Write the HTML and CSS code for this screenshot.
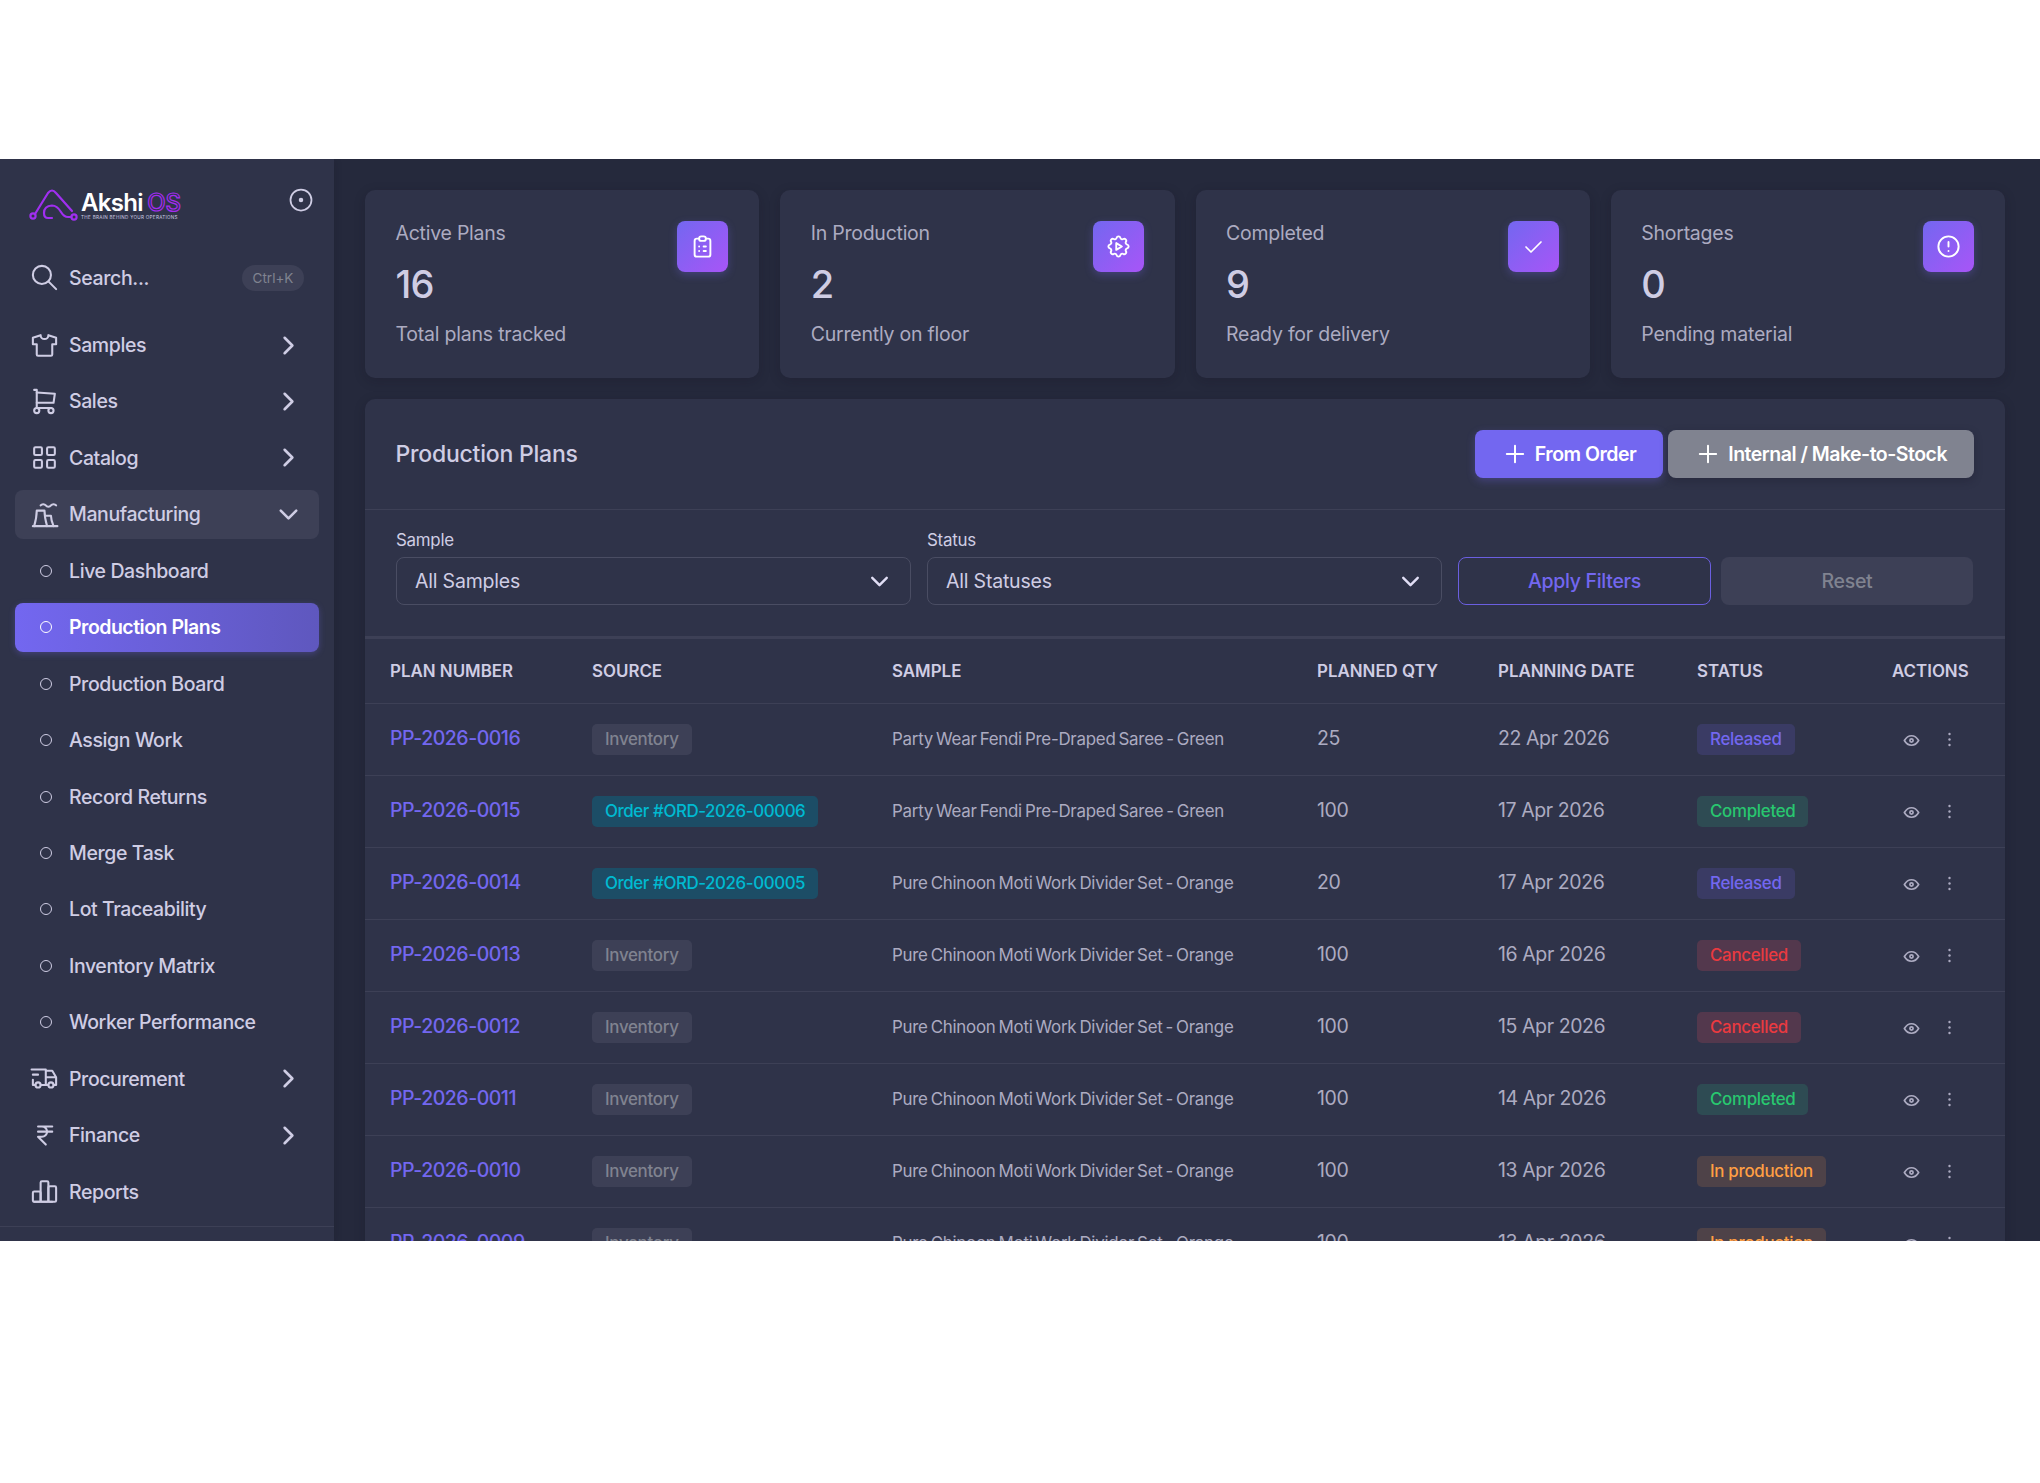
FILE: index.html
```html
<!DOCTYPE html>
<html lang="en">
<head>
    <meta charset="UTF-8">
    <meta name="viewport" content="width=device-width, initial-scale=1.0">
    <title>Production Plans</title>
    <link rel="stylesheet" href="styles.css">
</head>
<body>
    <!-- Icon sprite -->
    <svg class="sprite" xmlns="http://www.w3.org/2000/svg">
        <symbol id="i-search" viewBox="0 0 24 24"><circle cx="10" cy="10" r="7"/><path d="M21 21l-6 -6"/></symbol>
        <symbol id="i-shirt" viewBox="0 0 24 24"><path d="M15 4l6 2v5h-3v8a1 1 0 0 1 -1 1h-10a1 1 0 0 1 -1 -1v-8h-3v-5l6 -2a3 3 0 0 0 6 0"/></symbol>
        <symbol id="i-cart" viewBox="0 0 24 24"><circle cx="6" cy="19" r="2"/><circle cx="17" cy="19" r="2"/><path d="M17 17h-11v-14h-2"/><path d="M6 5l14 1l-1 7h-13"/></symbol>
        <symbol id="i-grid" viewBox="0 0 24 24"><rect x="4" y="4" width="6" height="6" rx="1"/><rect x="14" y="4" width="6" height="6" rx="1"/><rect x="4" y="14" width="6" height="6" rx="1"/><rect x="14" y="14" width="6" height="6" rx="1"/></symbol>
        <symbol id="i-factory" viewBox="0 0 24 24"><path d="M4 21c1.147 -4.02 1.983 -8.027 2 -12h6c.017 3.973 .853 7.98 2 12"/><path d="M12.5 13h4.5c.025 2.612 .894 5.296 2 8"/><path d="M9 5a2.4 2.4 0 0 1 2 -1a2.4 2.4 0 0 1 2 1a2.4 2.4 0 0 0 2 1a2.4 2.4 0 0 0 2 -1a2.4 2.4 0 0 1 2 -1a2.4 2.4 0 0 1 2 1"/><path d="M3 21l19 0"/></symbol>
        <symbol id="i-truck" viewBox="0 0 24 24"><circle cx="7" cy="17" r="2"/><circle cx="17" cy="17" r="2"/><path d="M5 17h-2v-4m-1 -8h11v12m-4 0h6m4 0h2v-6h-8m0 -5h5l3 5"/><path d="M3 9l4 0"/></symbol>
        <symbol id="i-rupee" viewBox="0 0 24 24"><path d="M18 5h-11h3a4 4 0 0 1 0 8h-3l6 6"/><path d="M7 9l11 0"/></symbol>
        <symbol id="i-chart" viewBox="0 0 24 24"><path d="M3 13a1 1 0 0 1 1 -1h4a1 1 0 0 1 1 1v6a1 1 0 0 1 -1 1h-4a1 1 0 0 1 -1 -1z"/><path d="M15 9a1 1 0 0 1 1 -1h4a1 1 0 0 1 1 1v10a1 1 0 0 1 -1 1h-4a1 1 0 0 1 -1 -1z"/><path d="M9 5a1 1 0 0 1 1 -1h4a1 1 0 0 1 1 1v14a1 1 0 0 1 -1 1h-4a1 1 0 0 1 -1 -1z"/><path d="M4 20h14"/></symbol>
        <symbol id="i-right" viewBox="0 0 24 24"><path d="M9 6l6 6l-6 6"/></symbol>
        <symbol id="i-down" viewBox="0 0 24 24"><path d="M6 9l6 6l6 -6"/></symbol>
        <symbol id="i-plus" viewBox="0 0 24 24"><path d="M12 5l0 14"/><path d="M5 12l14 0"/></symbol>
        <symbol id="i-clipboard" viewBox="0 0 24 24"><path d="M9 5h-2a2 2 0 0 0 -2 2v12a2 2 0 0 0 2 2h10a2 2 0 0 0 2 -2v-12a2 2 0 0 0 -2 -2h-2"/><path d="M9 5a2 2 0 0 1 2 -2h2a2 2 0 0 1 2 2v0a2 2 0 0 1 -2 2h-2a2 2 0 0 1 -2 -2z"/><path d="M9 12l.01 0"/><path d="M13 12l2 0"/><path d="M9 16l.01 0"/><path d="M13 16l2 0"/></symbol>
        <symbol id="i-gear" viewBox="0 0 24 24"><path d="M10.325 4.317c.426 -1.756 2.924 -1.756 3.35 0a1.724 1.724 0 0 0 2.573 1.066c1.543 -.94 3.31 .826 2.37 2.37a1.724 1.724 0 0 0 1.065 2.572c1.756 .426 1.756 2.924 0 3.35a1.724 1.724 0 0 0 -1.066 2.573c.94 1.543 -.826 3.31 -2.37 2.37a1.724 1.724 0 0 0 -2.572 1.065c-.426 1.756 -2.924 1.756 -3.35 0a1.724 1.724 0 0 0 -2.573 -1.066c-1.543 .94 -3.31 -.826 -2.37 -2.37a1.724 1.724 0 0 0 -1.065 -2.572c-1.756 -.426 -1.756 -2.924 0 -3.35a1.724 1.724 0 0 0 1.066 -2.573c-.94 -1.543 .826 -3.31 2.37 -2.37c1 .608 2.296 .07 2.572 -1.065z"/><path d="M10 9v6l5 -3z"/></symbol>
        <symbol id="i-check" viewBox="0 0 24 24"><path d="M5 12l5 5l10 -10"/></symbol>
        <symbol id="i-alert" viewBox="0 0 24 24"><circle cx="12" cy="12" r="9"/><path d="M12 8v4"/><path d="M12 16h.01"/></symbol>
        <symbol id="i-eye" viewBox="0 0 24 24"><path d="M10 12a2 2 0 1 0 4 0a2 2 0 0 0 -4 0"/><path d="M21 12c-2.4 4 -5.4 6 -9 6c-3.6 0 -6.6 -2 -9 -6c2.4 -4 5.4 -6 9 -6c3.6 0 6.6 2 9 6"/></symbol>
        <symbol id="i-dots" viewBox="0 0 24 24"><path d="M12 5h.01"/><path d="M12 12h.01"/><path d="M12 19h.01"/></symbol>
    </svg>

    <div class="app">
        <!-- Sidebar -->
        <aside class="sidebar">
            <div class="brand">
                <div class="logo">
                    <svg class="logo-mark" viewBox="0 0 54 36">
                        <path d="M7 27 L20 6 Q24 1 28 6 L44 24"/>
                        <path d="M24 31 H20 Q16 31 16 26 Q16 19 24 18.5 Q29 18.5 33 25 Q36 30 40 30 H43.5"/>
                        <circle cx="5" cy="29" r="2.6"/>
                        <circle cx="46" cy="30" r="2.6"/>
                    </svg>
                    <div class="logo-text">
                        <div class="logo-name">Akshi <span class="logo-os">OS</span></div>
                        <div class="logo-tag">THE BRAIN BEHIND YOUR OPERATIONS</div>
                    </div>
                </div>
                <svg class="collapse" viewBox="0 0 24 24"><circle cx="12" cy="12" r="9"/><circle class="collapse-dot" cx="12" cy="12" r="1.2"/></svg>
            </div>

            <div class="search">
                <svg class="nav-icon"><use href="#i-search"/></svg>
                <span class="search-label">Search...</span>
                <span class="kbd">Ctrl+K</span>
            </div>

            <nav class="nav">
                <a class="nav-item"><svg class="nav-icon"><use href="#i-shirt"/></svg><span class="nav-label">Samples</span><svg class="chev"><use href="#i-right"/></svg></a>
                <a class="nav-item"><svg class="nav-icon"><use href="#i-cart"/></svg><span class="nav-label">Sales</span><svg class="chev"><use href="#i-right"/></svg></a>
                <a class="nav-item"><svg class="nav-icon"><use href="#i-grid"/></svg><span class="nav-label">Catalog</span><svg class="chev"><use href="#i-right"/></svg></a>
                <a class="nav-item open"><svg class="nav-icon"><use href="#i-factory"/></svg><span class="nav-label">Manufacturing</span><svg class="chev"><use href="#i-down"/></svg></a>
                <a class="nav-item sub"><span class="dot"></span><span class="nav-label">Live Dashboard</span></a>
                <a class="nav-item sub active"><span class="dot"></span><span class="nav-label">Production Plans</span></a>
                <a class="nav-item sub"><span class="dot"></span><span class="nav-label">Production Board</span></a>
                <a class="nav-item sub"><span class="dot"></span><span class="nav-label">Assign Work</span></a>
                <a class="nav-item sub"><span class="dot"></span><span class="nav-label">Record Returns</span></a>
                <a class="nav-item sub"><span class="dot"></span><span class="nav-label">Merge Task</span></a>
                <a class="nav-item sub"><span class="dot"></span><span class="nav-label">Lot Traceability</span></a>
                <a class="nav-item sub"><span class="dot"></span><span class="nav-label">Inventory Matrix</span></a>
                <a class="nav-item sub"><span class="dot"></span><span class="nav-label">Worker Performance</span></a>
                <a class="nav-item"><svg class="nav-icon"><use href="#i-truck"/></svg><span class="nav-label">Procurement</span><svg class="chev"><use href="#i-right"/></svg></a>
                <a class="nav-item"><svg class="nav-icon"><use href="#i-rupee"/></svg><span class="nav-label">Finance</span><svg class="chev"><use href="#i-right"/></svg></a>
                <a class="nav-item"><svg class="nav-icon"><use href="#i-chart"/></svg><span class="nav-label">Reports</span></a>
            </nav>
            <div class="sidebar-foot"></div>
        </aside>

        <!-- Main content -->
        <main class="main">
            <section class="stats">
                <div class="stat-card">
                    <div class="stat-text">
                        <div class="stat-title">Active Plans</div>
                        <div class="stat-value">16</div>
                        <div class="stat-sub">Total plans tracked</div>
                    </div>
                    <div class="stat-icon"><svg><use href="#i-clipboard"/></svg></div>
                </div>
                <div class="stat-card">
                    <div class="stat-text">
                        <div class="stat-title">In Production</div>
                        <div class="stat-value">2</div>
                        <div class="stat-sub">Currently on floor</div>
                    </div>
                    <div class="stat-icon"><svg><use href="#i-gear"/></svg></div>
                </div>
                <div class="stat-card">
                    <div class="stat-text">
                        <div class="stat-title">Completed</div>
                        <div class="stat-value">9</div>
                        <div class="stat-sub">Ready for delivery</div>
                    </div>
                    <div class="stat-icon"><svg class="icon-check"><use href="#i-check"/></svg></div>
                </div>
                <div class="stat-card">
                    <div class="stat-text">
                        <div class="stat-title">Shortages</div>
                        <div class="stat-value">0</div>
                        <div class="stat-sub">Pending material</div>
                    </div>
                    <div class="stat-icon"><svg><use href="#i-alert"/></svg></div>
                </div>
            </section>

            <section class="panel">
                <div class="panel-head">
                    <h2 class="panel-title">Production Plans</h2>
                    <div class="panel-actions">
                        <button class="btn btn-primary"><svg><use href="#i-plus"/></svg>From Order</button>
                        <button class="btn btn-gray"><svg><use href="#i-plus"/></svg>Internal / Make-to-Stock</button>
                    </div>
                </div>

                <div class="filters">
                    <div class="field">
                        <label class="field-label">Sample</label>
                        <div class="select">All Samples<svg><use href="#i-down"/></svg></div>
                    </div>
                    <div class="field">
                        <label class="field-label">Status</label>
                        <div class="select">All Statuses<svg><use href="#i-down"/></svg></div>
                    </div>
                    <div class="filter-btns">
                        <button class="btn-outline">Apply Filters</button>
                        <button class="btn-reset">Reset</button>
                    </div>
                </div>

                <table class="plans">
                    <colgroup>
                        <col class="c1"><col class="c2"><col class="c3"><col class="c4"><col class="c5"><col class="c6"><col class="c7">
                    </colgroup>
                    <thead>
                        <tr><th>Plan Number</th><th>Source</th><th>Sample</th><th>Planned Qty</th><th>Planning Date</th><th>Status</th><th>Actions</th></tr>
                    </thead>
                    <tbody>
                        <tr>
                            <td><a class="plan-link">PP-2026-0016</a></td>
                            <td><span class="badge b-gray">Inventory</span></td>
                            <td class="sample">Party Wear Fendi Pre-Draped Saree - Green</td>
                            <td>25</td><td>22 Apr 2026</td>
                            <td><span class="badge b-purple">Released</span></td>
                            <td><div class="row-actions"><svg><use href="#i-eye"/></svg><svg class="more"><use href="#i-dots"/></svg></div></td>
                        </tr>
                        <tr>
                            <td><a class="plan-link">PP-2026-0015</a></td>
                            <td><span class="badge b-cyan">Order #ORD-2026-00006</span></td>
                            <td class="sample">Party Wear Fendi Pre-Draped Saree - Green</td>
                            <td>100</td><td>17 Apr 2026</td>
                            <td><span class="badge b-green">Completed</span></td>
                            <td><div class="row-actions"><svg><use href="#i-eye"/></svg><svg class="more"><use href="#i-dots"/></svg></div></td>
                        </tr>
                        <tr>
                            <td><a class="plan-link">PP-2026-0014</a></td>
                            <td><span class="badge b-cyan">Order #ORD-2026-00005</span></td>
                            <td class="sample">Pure Chinoon Moti Work Divider Set - Orange</td>
                            <td>20</td><td>17 Apr 2026</td>
                            <td><span class="badge b-purple">Released</span></td>
                            <td><div class="row-actions"><svg><use href="#i-eye"/></svg><svg class="more"><use href="#i-dots"/></svg></div></td>
                        </tr>
                        <tr>
                            <td><a class="plan-link">PP-2026-0013</a></td>
                            <td><span class="badge b-gray">Inventory</span></td>
                            <td class="sample">Pure Chinoon Moti Work Divider Set - Orange</td>
                            <td>100</td><td>16 Apr 2026</td>
                            <td><span class="badge b-red">Cancelled</span></td>
                            <td><div class="row-actions"><svg><use href="#i-eye"/></svg><svg class="more"><use href="#i-dots"/></svg></div></td>
                        </tr>
                        <tr>
                            <td><a class="plan-link">PP-2026-0012</a></td>
                            <td><span class="badge b-gray">Inventory</span></td>
                            <td class="sample">Pure Chinoon Moti Work Divider Set - Orange</td>
                            <td>100</td><td>15 Apr 2026</td>
                            <td><span class="badge b-red">Cancelled</span></td>
                            <td><div class="row-actions"><svg><use href="#i-eye"/></svg><svg class="more"><use href="#i-dots"/></svg></div></td>
                        </tr>
                        <tr>
                            <td><a class="plan-link">PP-2026-0011</a></td>
                            <td><span class="badge b-gray">Inventory</span></td>
                            <td class="sample">Pure Chinoon Moti Work Divider Set - Orange</td>
                            <td>100</td><td>14 Apr 2026</td>
                            <td><span class="badge b-green">Completed</span></td>
                            <td><div class="row-actions"><svg><use href="#i-eye"/></svg><svg class="more"><use href="#i-dots"/></svg></div></td>
                        </tr>
                        <tr>
                            <td><a class="plan-link">PP-2026-0010</a></td>
                            <td><span class="badge b-gray">Inventory</span></td>
                            <td class="sample">Pure Chinoon Moti Work Divider Set - Orange</td>
                            <td>100</td><td>13 Apr 2026</td>
                            <td><span class="badge b-orange">In production</span></td>
                            <td><div class="row-actions"><svg><use href="#i-eye"/></svg><svg class="more"><use href="#i-dots"/></svg></div></td>
                        </tr>
                        <tr>
                            <td><a class="plan-link">PP-2026-0009</a></td>
                            <td><span class="badge b-gray">Inventory</span></td>
                            <td class="sample">Pure Chinoon Moti Work Divider Set - Orange</td>
                            <td>100</td><td>13 Apr 2026</td>
                            <td><span class="badge b-orange">In production</span></td>
                            <td><div class="row-actions"><svg><use href="#i-eye"/></svg><svg class="more"><use href="#i-dots"/></svg></div></td>
                        </tr>
                    </tbody>
                </table>
            </section>
        </main>
    </div>
</body>
</html>
```

FILE: styles.css
```css
* { box-sizing: border-box; }
html, body { margin: 0; background-color: #ffffff; }
body { padding-top: 159px; font-family: "Inter", "Noto Sans", sans-serif; color: #acabc1; }
.sprite { display: none; }
svg { fill: none; stroke: currentColor; stroke-width: 2; stroke-linecap: round; stroke-linejoin: round; flex: none; }

.app { display: flex; height: 1082px; overflow: hidden; background-color: #25293c; }

/* Sidebar */
.sidebar {
    width: 334px;
    flex: none;
    background-color: #2f3349;
    box-shadow: 0 2px 8px rgba(19, 17, 32, 0.2);
    position: relative;
    z-index: 1;
    padding: 0 15px;
}

.brand { height: 94px; display: flex; align-items: center; justify-content: space-between; padding: 0 4px 0 13px; }
.logo { display: flex; align-items: center; }
.logo-mark { width: 54px; height: 36px; stroke: #a02ff0; stroke-width: 2.2; margin-top: -2px; }
.logo-text { margin-top: -2px; margin-left: -1px; }
.logo-name { font-size: 24px; line-height: 25px; font-weight: 600; color: #ffffff; letter-spacing: -0.7px; }
.logo-os { color: transparent; -webkit-text-stroke: 1.2px #a32cf0; font-weight: 500; margin-left: -1px; letter-spacing: 0; }
.logo-tag { font-size: 4.6px; line-height: 6px; color: #cfcde4; letter-spacing: 0.3px; white-space: nowrap; }
.collapse { width: 28px; height: 28px; color: #cfcde4; stroke-width: 1.5; margin-top: -12px; }
.collapse-dot { fill: currentColor; }

.search { height: 49px; display: flex; align-items: center; padding: 0 15px 0 14px; color: #cfcde4; }
.search-label { font-size: 19.5px; font-weight: 500; letter-spacing: -0.35px; }
.kbd {
    margin-left: auto;
    height: 26px;
    width: 62px;
    border-radius: 13px;
    background-color: #3d4056;
    color: #808390;
    font-size: 13.5px;
    display: flex;
    align-items: center;
    justify-content: center;
}

.nav { margin-top: 18.5px; display: flex; flex-direction: column; gap: 7.45px; }
.nav-item {
    height: 49px;
    display: flex;
    align-items: center;
    padding: 0 15px 0 14px;
    border-radius: 8px;
    color: #cfcde4;
}
.nav-icon { width: 31px; height: 31px; stroke-width: 1.6; margin-right: 9px; color: #cfcde4; }
.nav-label { font-size: 19.5px; font-weight: 500; letter-spacing: -0.4px; white-space: nowrap; }
.chev { width: 31px; height: 31px; margin-left: auto; stroke-width: 2; }
.nav-item.open { background-color: #3d4056; }
.nav-item.sub { padding-left: 25px; }
.dot { width: 12px; height: 12px; border: 1.6px solid #cfcde4; border-radius: 50%; margin-right: 17px; flex: none; }
.nav-item.active {
    background: linear-gradient(270deg, rgba(115, 103, 240, 0.7), #7367f0);
    box-shadow: 0 2px 6px rgba(115, 103, 240, 0.3);
    color: #ffffff;
}
.nav-item.active .nav-label { font-weight: 600; letter-spacing: -0.5px; }
.nav-item.active .dot { border-color: #ffffff; }
.sidebar-foot { border-top: 1px solid #3d4056; margin: 10px -15px 0; }

/* Main */
.main { flex: 1; min-width: 0; padding: 31px 35px 0 31px; }

.stats { display: grid; grid-template-columns: repeat(4, 1fr); gap: 21px; }
.stat-card {
    height: 188px;
    background-color: #2f3349;
    border-radius: 10px;
    padding: 31px 31px 31px 30.5px;
    display: flex;
    justify-content: space-between;
    box-shadow: 0 3px 12px rgba(19, 17, 32, 0.2);
}
.stat-title { font-size: 19.5px; line-height: 24px; letter-spacing: -0.25px; }
.stat-value { font-size: 38px; line-height: 46px; font-weight: 500; color: #cfcde4; margin-top: 16px; letter-spacing: -0.7px; }
.stat-sub { font-size: 19.5px; line-height: 24px; letter-spacing: -0.22px; margin-top: 15px; }
.stat-icon {
    width: 51px;
    height: 51px;
    border-radius: 8px;
    background: linear-gradient(135deg, #7367f0, #a855f7);
    box-shadow: 0 3px 8px rgba(115, 103, 240, 0.3);
    color: #ffffff;
    display: flex;
    align-items: center;
    justify-content: center;
}
.stat-icon svg { width: 27px; height: 27px; stroke-width: 1.7; }
.stat-icon .icon-check { width: 24px; height: 24px; }

.panel {
    margin-top: 21px;
    background-color: #2f3349;
    border-radius: 10px 10px 0 0;
    box-shadow: 0 3px 12px rgba(19, 17, 32, 0.2);
    overflow: hidden;
}
.panel-head {
    height: 111px;
    border-bottom: 1px solid #3d4056;
    padding: 0 31px 0 30.5px;
    display: flex;
    align-items: center;
    justify-content: space-between;
}
.panel-title { margin: 0; font-size: 23px; font-weight: 500; color: #cfcde4; letter-spacing: -0.22px; }
.panel-actions { display: flex; gap: 5px; }
.btn {
    height: 48px;
    border: none;
    border-radius: 8px;
    padding: 0 27px 0 26px;
    display: flex;
    align-items: center;
    gap: 6px;
    color: #ffffff;
    font-family: inherit;
    font-size: 19.5px;
    font-weight: 600;
    letter-spacing: -0.5px;
}
.btn svg { width: 28px; height: 28px; stroke-width: 1.7; }
.btn-primary { background-color: #7367f0; box-shadow: 0 3px 8px rgba(115, 103, 240, 0.3); }
.btn-gray { background-color: #808390; box-shadow: 0 3px 8px rgba(19, 17, 32, 0.25); }

.filters {
    height: 129px;
    border-bottom: 3px solid #3d4056;
    padding: 20px 31px 0;
    display: grid;
    grid-template-columns: 515px 515px 515px;
    column-gap: 16px;
    align-items: end;
    align-content: start;
}
.field-label { display: block; font-size: 16.9px; line-height: 21px; color: #cfcde4; letter-spacing: -0.25px; margin-bottom: 6px; }
.select {
    height: 48px;
    border: 1.3px solid #4a4d63;
    border-radius: 8px;
    padding: 0 16px 0 18px;
    display: flex;
    align-items: center;
    justify-content: space-between;
    font-size: 19.5px;
    letter-spacing: -0.2px;
    color: #cfcde4;
}
.select svg { width: 29px; height: 29px; stroke-width: 2; color: #e1def5; }
.filter-btns { display: flex; gap: 10px; }
.btn-outline, .btn-reset {
    height: 48px;
    border-radius: 8px;
    font-family: inherit;
    font-size: 19.5px;
    letter-spacing: -0.3px;
}
.btn-outline { width: 253px; flex: none; background: transparent; border: 1.5px solid #6b5fe0; color: #7367f0; font-weight: 500; }
.btn-reset { flex: 1; background-color: #3d4056; border: none; color: #808390; font-weight: 500; }

/* Table */
.plans { width: 100%; border-collapse: collapse; table-layout: fixed; }
.c1 { width: 201px; }
.c2 { width: 300px; }
.c3 { width: 425px; }
.c4 { width: 181px; }
.c5 { width: 199px; }
.c6 { width: 195px; }
.c7 { width: 139px; }
.plans th {
    height: 64px;
    padding: 0 0 0 26px;
    text-align: left;
    font-size: 16.9px;
    font-weight: 600;
    letter-spacing: 0;
    text-transform: uppercase;
    color: #cfcde4;
    border-bottom: 1px solid #3d4056;
    white-space: nowrap;
}
.plans td {
    height: 72px;
    padding: 0 0 0 26px;
    font-size: 19.5px;
    letter-spacing: -0.4px;
    color: #acabc1;
    border-bottom: 1px solid #3d4056;
    white-space: nowrap;
}
.plans th:first-child, .plans td:first-child { padding-left: 25px; }
.plans td:nth-child(1), .plans td:nth-child(4), .plans td:nth-child(5) { padding-bottom: 2px; }
.plans td.sample { font-size: 16.9px; letter-spacing: -0.25px; word-spacing: -1.5px; }
.plan-link { color: #7367f0; font-weight: 500; letter-spacing: -0.5px; }
.badge {
    display: inline-flex;
    align-items: center;
    height: 31px;
    padding: 0 13px;
    border-radius: 5px;
    font-size: 16.9px;
    font-weight: 500;
    letter-spacing: -0.3px;
    vertical-align: middle;
}
.b-gray { background-color: #3d4056; color: #808390; }
.b-cyan { background-color: #1c4d66; color: #00bad1; letter-spacing: -0.42px; }
.b-purple { background-color: #3a3b64; color: #7367f0; }
.b-green { background-color: #2e4b53; color: #28c76f; }
.b-red { background-color: #53384d; color: #ea3a40; }
.b-orange { background-color: #4e4248; color: #ff9f43; }
.row-actions { display: flex; align-items: center; gap: 19px; padding: 2px 0 0 10px; color: #acabc1; }
.row-actions svg { width: 19px; height: 19px; stroke-width: 2.2; }
.row-actions .more { stroke-width: 3; margin-top: -2px; }
```
